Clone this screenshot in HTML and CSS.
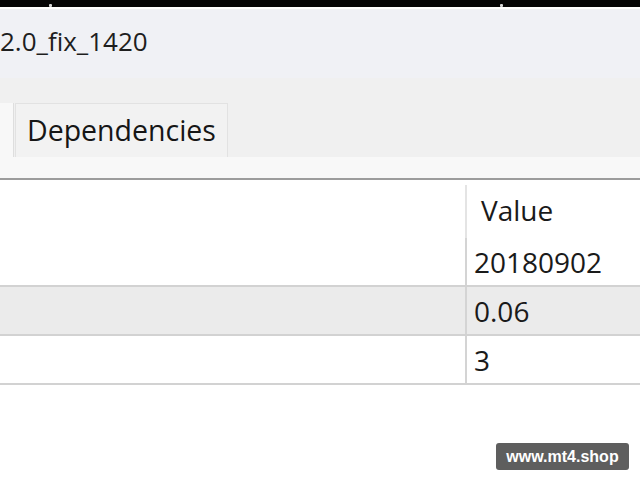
FILE: index.html
```html
<!DOCTYPE html>
<html>
<head>
<meta charset="utf-8">
<link rel="stylesheet" href="styles.css">
</head>
<body>
<div class="topbar">
  <span class="tick tick-a"></span>
  <span class="tick tick-b"></span>
</div>
<div class="titlebar">
  <div class="title">2.0_fix_1420</div>
</div>
<div class="tabstrip">
  <div class="tab-prev"></div>
  <div class="tab">Dependencies</div>
</div>
<div class="panel-gap"></div>
<div class="grid">
  <div class="row header">
    <div class="cell name"></div>
    <div class="cell value">Value</div>
  </div>
  <div class="row">
    <div class="cell name"></div>
    <div class="cell value">20180902</div>
  </div>
  <div class="row alt">
    <div class="cell name"></div>
    <div class="cell value">0.06</div>
  </div>
  <div class="row">
    <div class="cell name"></div>
    <div class="cell value">3</div>
  </div>
</div>
<div class="watermark">www.mt4.shop</div>
</body>
</html>
```
FILE: styles.css
```css
html, body {
  margin: 0;
  padding: 0;
  width: 640px;
  height: 480px;
  overflow: hidden;
  background: #ffffff;
  font-family: "Open Sans", "Liberation Sans", sans-serif;
  color: #1a1a1a;
  position: relative;
}
.topbar {
  height: 7px;
  background: #050505;
  display: flex;
  align-items: flex-end;
}
.tick {
  width: 3px;
  height: 3px;
  background: #d8d8d8;
  border-radius: 1px;
}
.tick-a { margin-left: 49px; }
.tick-b { margin-left: 448px; }
.titlebar {
  height: 69px;
  border-top: 2px solid #ffffff;
  background: #f0f1f5;
  display: flex;
  align-items: center;
}
.title {
  font-size: 26px;
  margin-left: 0;
  margin-top: -6px;
  color: #1e1e1e;
}
.tabstrip {
  height: 79px;
  background: #f0f0f0;
  display: flex;
  align-items: flex-end;
}
.tab-prev {
  width: 13px;
  height: 54px;
  background: #f8f8f8;
  border-right: 1px solid #dedede;
}
.tab {
  margin-left: 1px;
  width: 200px;
  height: 53px;
  border: 1px solid #e2e2e2;
  border-bottom: none;
  background: #f2f2f2;
  font-size: 28.5px;
  padding-left: 11px;
  line-height: 52px;
  color: #161616;
}
.panel-gap {
  height: 21px;
  background: #f8f8f8;
  border-bottom: 2px solid #9c9c9c;
}
.grid {
  display: flex;
  flex-direction: column;
}
.row {
  display: flex;
  height: 47px;
  border-bottom: 2px solid #d2d2d2;
  background: #ffffff;
}
.row.header {
  height: 58px;
  border-bottom: none;
}
.row.alt {
  background: #ebebeb;
}
.cell.name {
  width: 465px;
  border-right: 2px solid #d4d4d4;
}
.header .cell.name {
  border-right-color: #e4e4e4;
  margin-top: 5px;
}
.cell.value {
  font-size: 28px;
  padding-left: 7px;
  display: flex;
  align-items: center;
}
.header .cell.value {
  padding-left: 14px;
  padding-top: 2px;
}
.watermark {
  position: absolute;
  left: 496px;
  top: 443px;
  width: 133px;
  height: 27px;
  border-radius: 3px;
  background: #5e5e5e;
  color: #ffffff;
  font-family: "Liberation Sans", Arial, sans-serif;
  font-weight: bold;
  font-size: 16px;
  display: flex;
  align-items: center;
  justify-content: center;
}
```
